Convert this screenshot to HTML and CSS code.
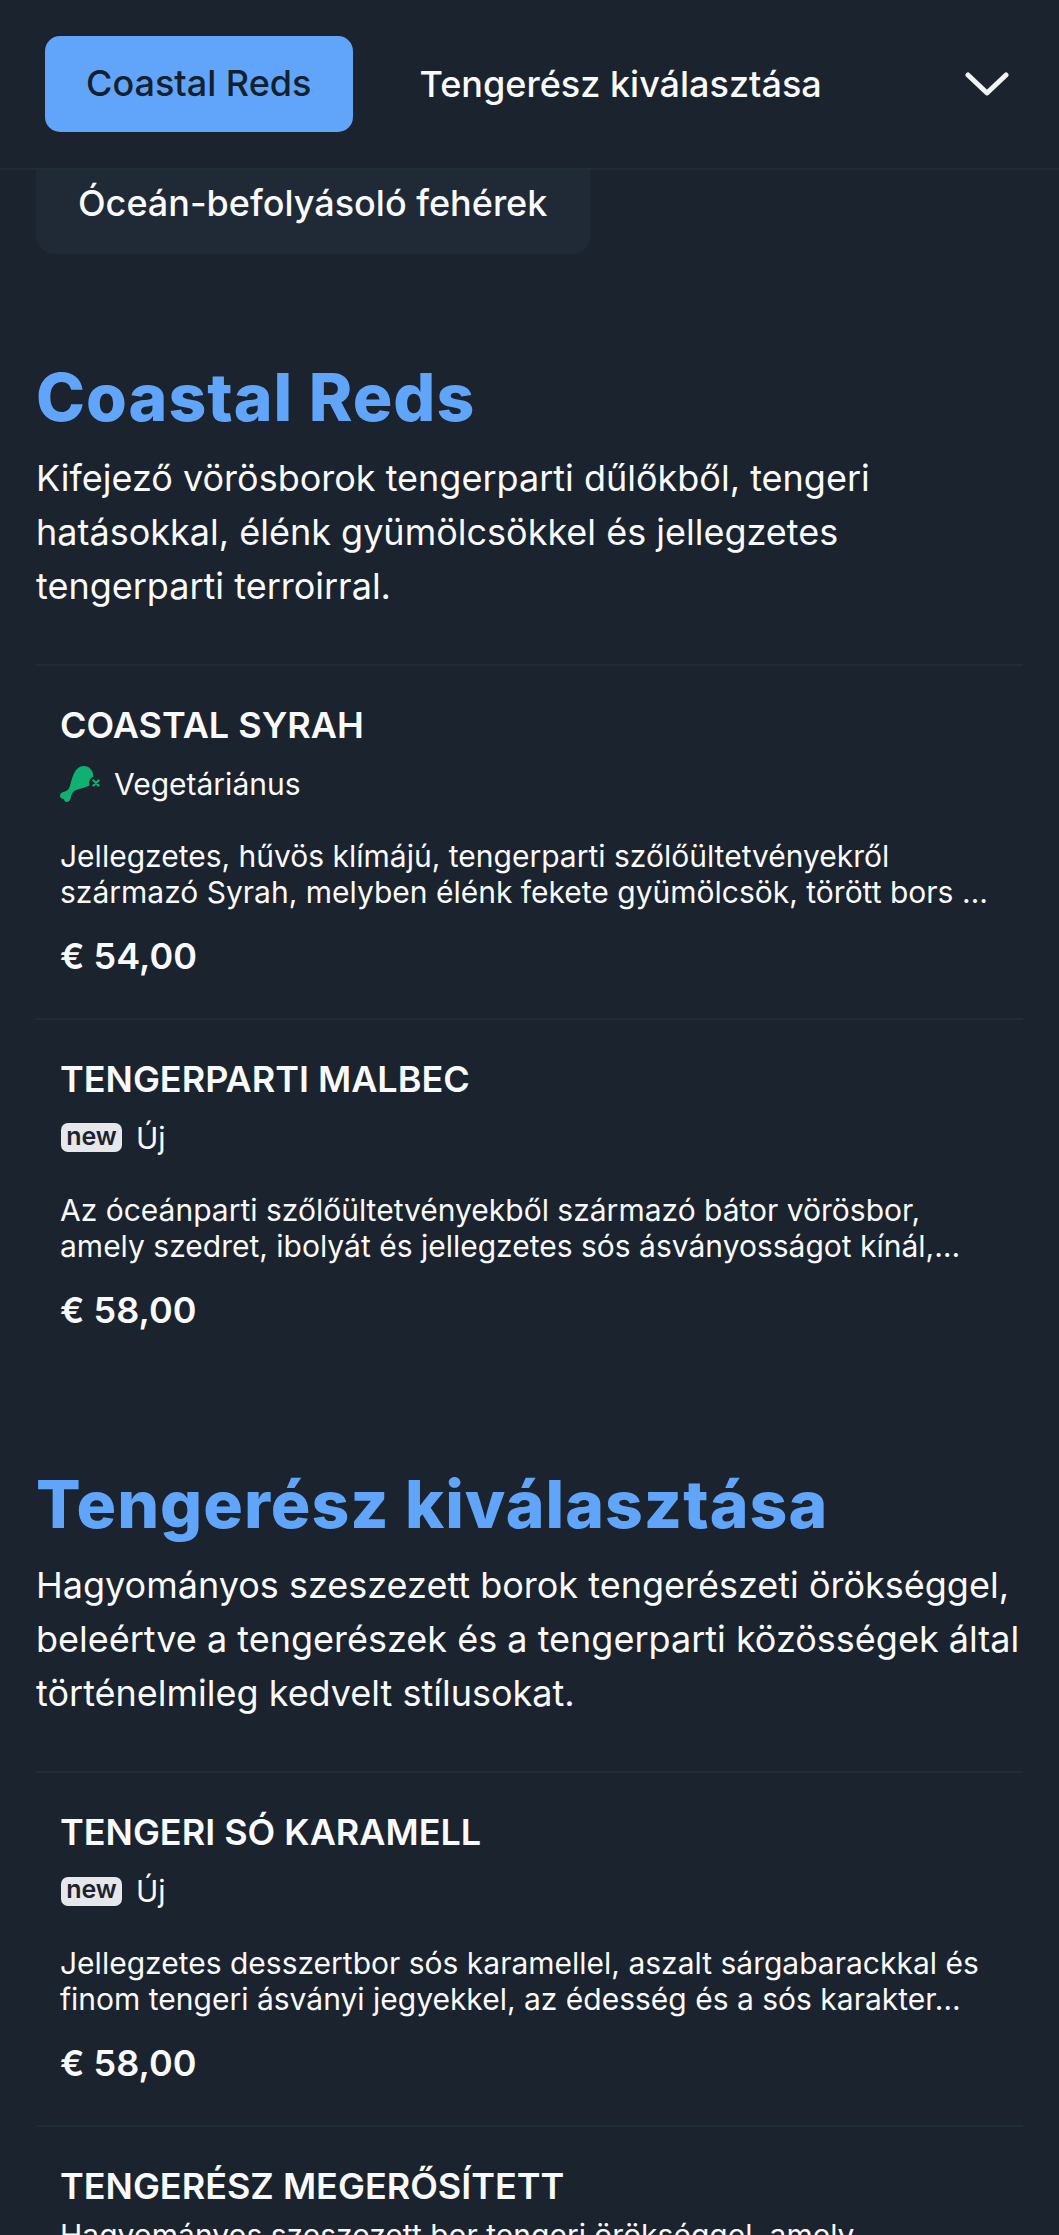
FILE: index.html
```html
<!DOCTYPE html>
<html lang="hu">
<head>
<meta charset="utf-8">
<title>Menü</title>
<link rel="stylesheet" href="styles.css">
</head>
<body>
<header class="topbar">
  <nav class="tabs">
    <a class="tab tab-active">Coastal Reds</a>
    <a class="tab">Tengerész kiválasztása</a>
  </nav>
  <button class="more" aria-label="Több">
    <svg width="44" height="28" viewBox="0 0 44 28" fill="none" stroke="#f3f4f6" stroke-width="5" stroke-linecap="round" stroke-linejoin="round"><path d="M3 5 L22 23 L41 5"/></svg>
  </button>
</header>
<div class="chip-wrap"><a class="chip">Óceán-befolyásoló fehérek</a></div>

<section class="section first">
  <h2 class="sec-title">Coastal Reds</h2>
  <p class="sec-desc">Kifejező vörösborok tengerparti dűlőkből, tengeri hatásokkal, élénk gyümölcsökkel és jellegzetes tengerparti terroirral.</p>
  <article class="item">
    <h3 class="name">COASTAL SYRAH</h3>
    <div class="tag">
      <svg class="veg" width="40" height="36" viewBox="0 0 40 36"><path fill="#10b072" d="M24 0C29 0 33 4 33.5 10.5A7 7 0 0 0 29.5 19.5C25 22 19 22.5 15 24.5C12.5 26 11.5 28 11 31C10.5 34 9 36 6.5 36C5 36 4 34.5 4 33C2 33 0 32 0 29.5C0 27 3 26 5 25.5C8 24.5 9.5 22 10.5 18C12 12 14 6 17 3C19 1 21 0 24 0Z"/><path stroke="#10b072" stroke-width="2.4" stroke-linecap="round" d="M33.5 14.5l5 5M38.5 14.5l-5 5"/></svg>
      <span>Vegetáriánus</span>
    </div>
    <p class="desc">Jellegzetes, hűvös klímájú, tengerparti szőlőültetvényekről származó Syrah, melyben élénk fekete gyümölcsök, törött bors …</p>
    <div class="price">€ 54,00</div>
  </article>
  <article class="item">
    <h3 class="name">TENGERPARTI MALBEC</h3>
    <div class="tag"><span class="new">new</span><span>Új</span></div>
    <p class="desc">Az óceánparti szőlőültetvényekből származó bátor vörösbor, amely szedret, ibolyát és jellegzetes sós ásványosságot kínál,…</p>
    <div class="price">€ 58,00</div>
  </article>
</section>

<section class="section">
  <h2 class="sec-title">Tengerész kiválasztása</h2>
  <p class="sec-desc">Hagyományos szeszezett borok tengerészeti örökséggel, beleértve a tengerészek és a tengerparti közösségek által történelmileg kedvelt stílusokat.</p>
  <article class="item">
    <h3 class="name">TENGERI SÓ KARAMELL</h3>
    <div class="tag"><span class="new">new</span><span>Új</span></div>
    <p class="desc">Jellegzetes desszertbor sós karamellel, aszalt sárgabarackkal és finom tengeri ásványi jegyekkel, az édesség és a sós karakter…</p>
    <div class="price">€ 58,00</div>
  </article>
  <article class="item">
    <h3 class="name">TENGERÉSZ MEGERŐSÍTETT</h3>
    <p class="desc desc-tight">Hagyományos szeszezett bor tengeri örökséggel, amely</p>
  </article>
</section>
</body>
</html>
```
FILE: styles.css
```css
* { box-sizing: border-box; }
html, body { margin: 0; padding: 0; height: 2235px; overflow: hidden; }
body { background: #1b232e; color: #f9fafb; font-family: Inter, "Liberation Sans", sans-serif; }

.topbar { height: 170px; display: flex; align-items: flex-start; justify-content: space-between; padding: 36px 45px 0; border-bottom: 2px solid #1f2d37; }
.tabs { display: flex; align-items: center; gap: 26px; }
.tab { display: flex; align-items: center; height: 94px; padding: 0 41px; font-size: 36px; font-weight: 500; border-radius: 15px; white-space: nowrap; }
.tab-active { background: #60a5fa; color: #14202e; height: 96px; padding-bottom: 2px; }
.more { width: 60px; height: 96px; margin-right: -3px; display: flex; align-items: center; justify-content: center; background: none; border: 0; padding: 0; }

.chip-wrap { padding: 0 36px; }
.chip { display: inline-flex; align-items: center; width: 554px; height: 84px; padding: 0 0 18px 42px; font-size: 36px; font-weight: 500; background: #1f2a36; border-radius: 0 0 18px 18px; }

.section { padding: 0 36px; margin-top: 91px; }
.section.first { margin-top: 101px; }
.sec-title { margin: 0; font-size: 66px; line-height: 84px; font-weight: 800; letter-spacing: 1px; color: #60a5fa; }
.sec-desc { margin: 12px 0 0; font-size: 36px; line-height: 54px; }

.item { margin-top: 51px; height: 353.5px; padding: 37px 24px 0; border-top: 2px solid #1f2d37; }
.section .item + .item { margin-top: 0; }
.name { margin: 0; font-size: 36px; line-height: 44px; font-weight: 600; }
.tag { display: flex; align-items: center; gap: 14px; margin-top: 15px; height: 44px; font-size: 30px; }
.veg { flex: none; }
.new { display: flex; align-items: center; justify-content: center; width: 61px; height: 29px; margin-left: 1px; font-size: 25px; font-weight: 600; line-height: 1; padding-bottom: 3px; background: #e5e7eb; color: #1b232e; border-radius: 7px; }
.desc { margin: 32px 0 0; font-size: 30px; line-height: 36px; }
.desc-tight { margin-top: 9px; }
.price { margin-top: 24px; font-size: 36px; line-height: 44px; font-weight: 600; }
```
